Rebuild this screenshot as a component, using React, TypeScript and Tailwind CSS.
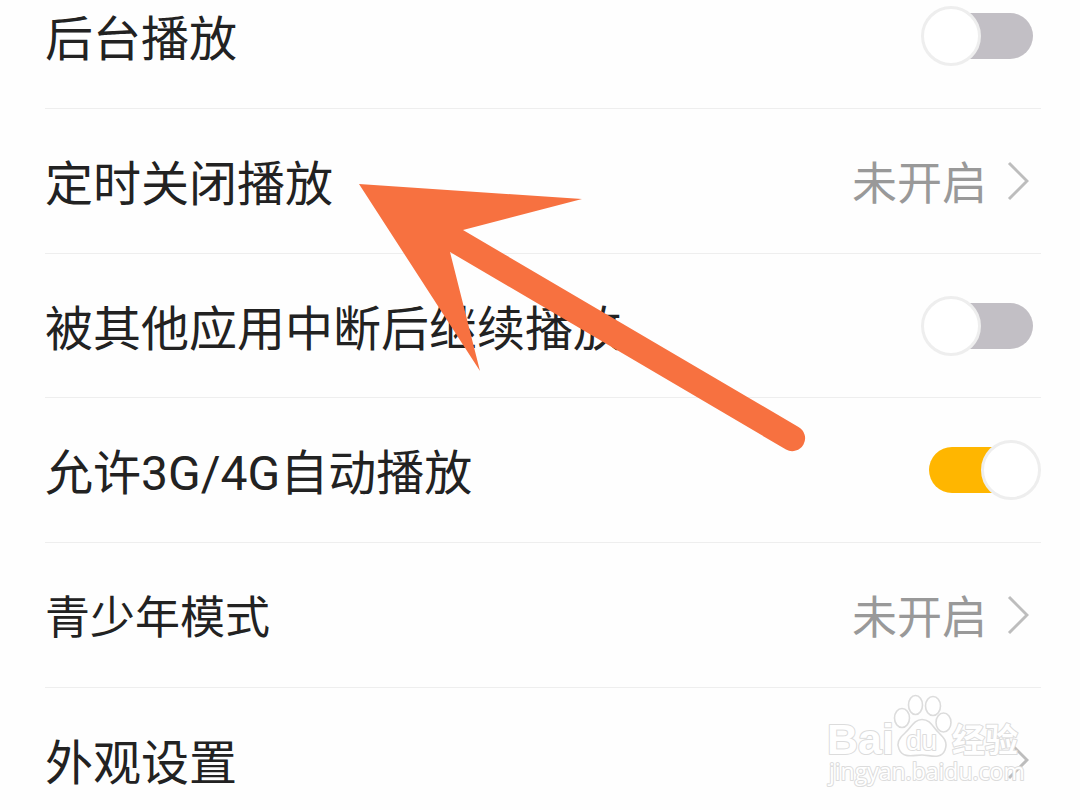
import React from 'react';

interface SettingItem {
  id: string;
  label: string;
  type: 'switch' | 'link';
  value?: string;
  checked?: boolean;
  small?: boolean;
}

const items: SettingItem[] = [
  { id: 'background', label: '后台播放', type: 'switch', checked: false },
  { id: 'timer', label: '定时关闭播放', type: 'link', value: '未开启' },
  { id: 'resume', label: '被其他应用中断后继续播放', type: 'switch', checked: false },
  { id: 'mobile', label: '允许3G/4G自动播放', type: 'switch', checked: true },
  { id: 'teen', label: '青少年模式', type: 'link', value: '未开启', small: true },
  { id: 'appearance', label: '外观设置', type: 'link' }
];

const Chevron: React.FC = () => (
  <svg className="mr-3 h-10 w-6 shrink-0" viewBox="0 0 24 40" fill="none" stroke="#bdbdbd" strokeWidth="3" aria-hidden="true">
    <path d="M4 2 L22 20 L4 38" />
  </svg>
);

const Switch: React.FC<{ id: string; checked?: boolean }> = ({ id, checked }) => (
  <span className="relative flex h-15 w-30 shrink-0 items-center px-2">
    <input id={id} type="checkbox" role="switch" defaultChecked={checked} className="peer h-[46px] w-full appearance-none rounded-full bg-[#c2bfc5] checked:bg-[#ffb600]" />
    <span className="pointer-events-none absolute left-0 top-0 size-15 rounded-full border-3 border-[#eeeeee] bg-white peer-checked:left-15" />
  </span>
);

const SettingRow: React.FC<{ item: SettingItem }> = ({ item }) => {
  const size = item.small ? 'text-[45px]' : 'text-[48px]';
  return (
    <li className="ml-[45px] mr-[39px] flex h-[145px] items-center justify-between border-b border-[#eeeeee] nth-[3n]:h-36">
      {item.type === 'switch' ? (
        <>
          <label htmlFor={item.id} className={`${size} pt-2 leading-[70px]`}>{item.label}</label>
          <Switch id={item.id} checked={item.checked} />
        </>
      ) : (
        <a href={`#${item.id}`} className="flex flex-1 items-center justify-between">
          <span className={`${size} pt-2 leading-[70px]`}>{item.label}</span>
          <span className="flex items-center gap-[18px]">
            {item.value && <span className="pt-2 text-[45px] leading-[70px] text-[#999999]">{item.value}</span>}
            <Chevron />
          </span>
        </a>
      )}
    </li>
  );
};

// Hand-drawn pointer towards the sleep timer row
const Arrow: React.FC = () => (
  <svg className="pointer-events-none absolute left-[359px] top-[183px] h-[270px] w-[448px]" viewBox="359 183 448 270" aria-hidden="true">
    <path d="M359 184 L582 199 L463 230 L798.5 427 A12.7 12.7 0 0 1 786 449.5 L450 252 L480 371 Z" fill="#f77140" />
  </svg>
);

const Watermark: React.FC = () => (
  <svg
    className="pointer-events-none absolute bottom-4 right-[54px] h-[102px] w-[204px]"
    viewBox="822 692 204 102"
    fill="#ffffff"
    stroke="#dcdcdc"
    strokeWidth="1.6"
    strokeLinejoin="round"
    role="img"
    aria-label="Baidu 经验"
  >
    <ellipse cx="902" cy="718" rx="7.5" ry="9.5" />
    <ellipse cx="915.5" cy="705" rx="7" ry="9.5" />
    <ellipse cx="933" cy="706" rx="7.5" ry="9.5" />
    <ellipse cx="943.5" cy="722.5" rx="7.5" ry="9.5" />
    <path d="M922 719.5 C914 719.5 911 728 905 733 C899 738 896 743 899 749 C903 759 914 755 922 755 C930 755 941 760 945 750 C948 742 944 738 939 733 C933 728 931 719.5 922 719.5 Z" />
    <g paintOrder="stroke" strokeWidth="2">
      <text x="827" y="754" fontFamily="'Liberation Sans', sans-serif" fontWeight="700" fontSize="43">Bai</text>
      <text x="906" y="750" fontFamily="'Liberation Sans', sans-serif" fontSize="28">du</text>
      <text x="952" y="752" fontFamily="'Noto Sans CJK SC', sans-serif" fontWeight="700" fontSize="33">经验</text>
      <text x="829" y="780" fontFamily="'Open Sans', sans-serif" fontSize="23">jingyan.baidu.com</text>
    </g>
  </svg>
);

const App: React.FC = () => {
  return (
    <main className="relative h-screen overflow-hidden bg-[#fefefe] font-[Roboto,'Noto_Sans_CJK_SC',sans-serif] text-[#222222]">
      <ul className="-mt-9">
        {items.map(item => <SettingRow key={item.id} item={item} />)}
      </ul>
      <Arrow />
      <Watermark />
    </main>
  );
};

export default App;
